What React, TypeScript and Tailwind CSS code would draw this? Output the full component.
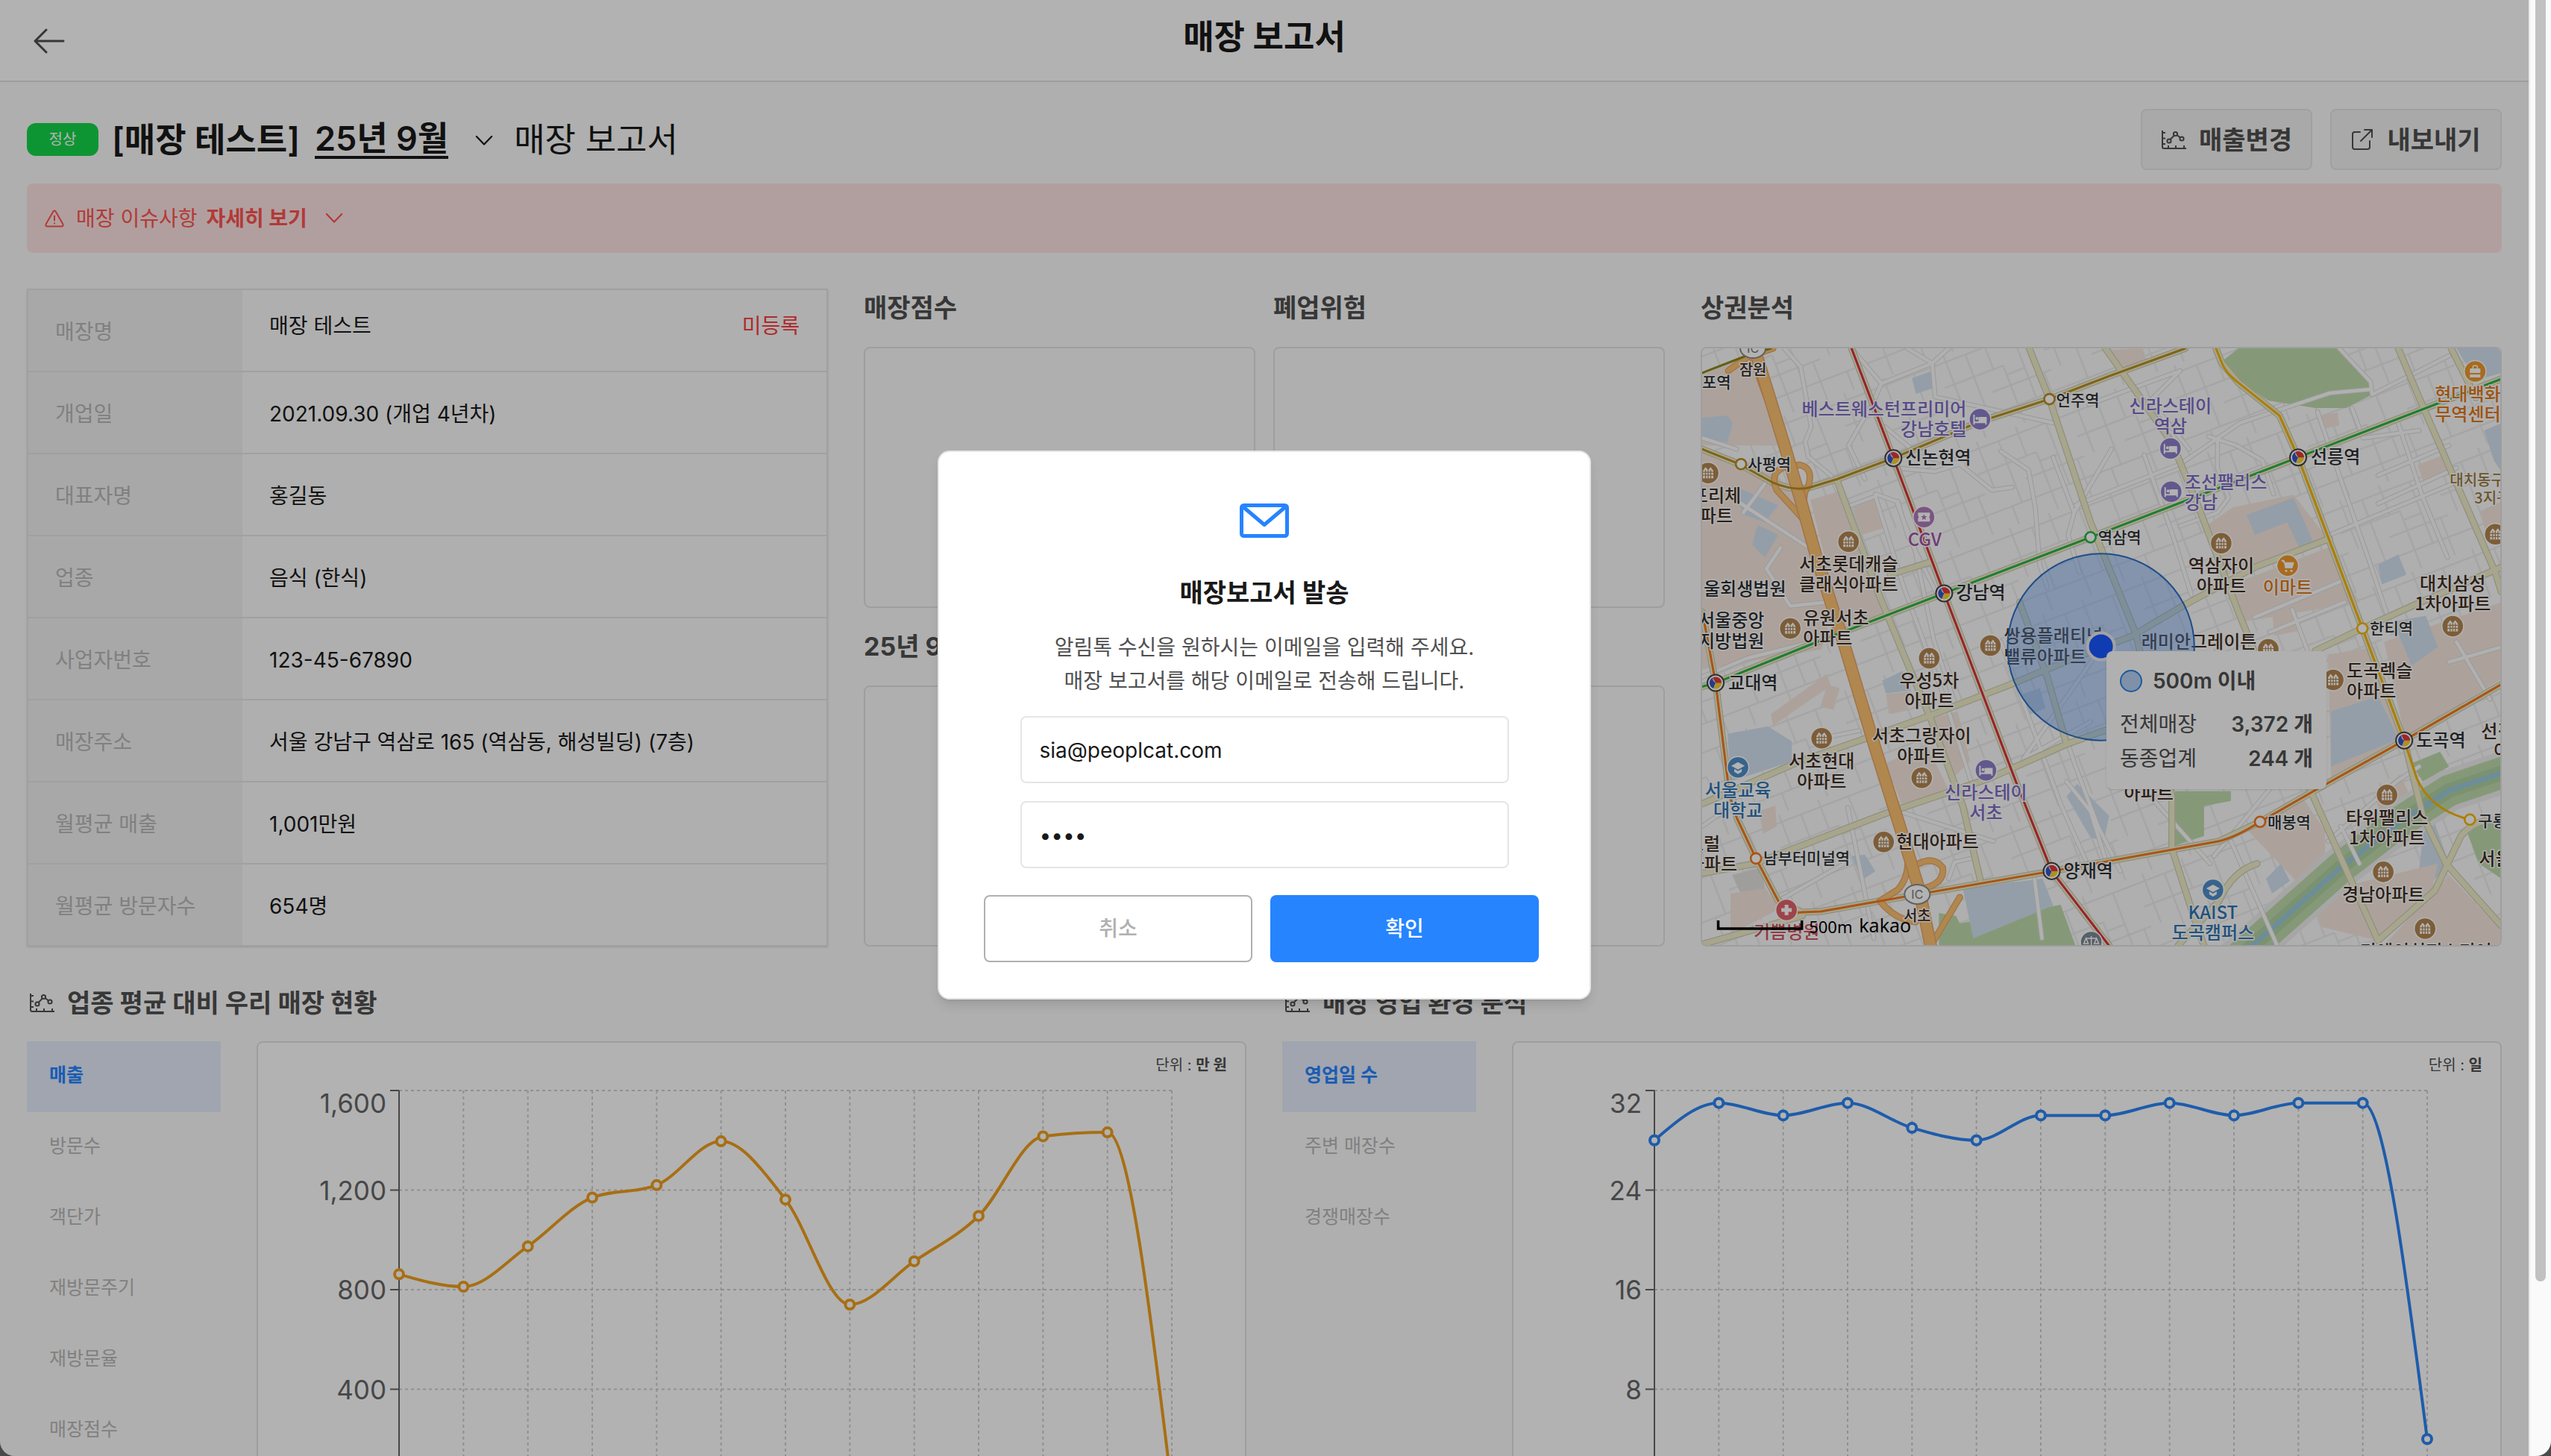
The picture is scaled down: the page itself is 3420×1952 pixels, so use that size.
import React, { useState } from 'react';

type Point = [number, number];

const storeInfo = [
  { label: '매장명', value: '매장 테스트', note: '미등록' },
  { label: '개업일', value: '2021.09.30 (개업 4년차)' },
  { label: '대표자명', value: '홍길동' },
  { label: '업종', value: '음식 (한식)' },
  { label: '사업자번호', value: '123-45-67890' },
  { label: '매장주소', value: '서울 강남구 역삼로 165 (역삼동, 해성빌딩) (7층)' },
  { label: '월평균 매출', value: '1,001만원' },
  { label: '월평균 방문자수', value: '654명' },
];

const salesTabs = ['매출', '방문수', '객단가', '재방문주기', '재방문율', '매장점수'];
const areaTabs = ['영업일 수', '주변 매장수', '경쟁매장수'];

const salesData = [862, 812, 974, 1170, 1220, 1396, 1162, 740, 914, 1096, 1416, 1432, 0];
const openDaysData = [28, 31, 30, 31, 29, 28, 30, 30, 31, 30, 31, 31, 4];

/* ---------- icons ---------- */

const ChartIcon = () => (
  <svg width="35" height="27" viewBox="-1 -1 35 27" fill="none" stroke="currentColor" strokeWidth="2" className="shrink-0">
    <path d="M1 0V22Q1 24 3 24H33M1 3H5M1 10.5H5M1 18H5M9 24V20M19 24V20M30 24V20M11.5 12 17 6.5M20.5 6 25 9.5" />
    <circle cx="10" cy="14" r="2.6" />
    <circle cx="18.5" cy="4.5" r="2.6" />
    <circle cx="27" cy="11" r="2.6" />
  </svg>
);

const ExportIcon = () => (
  <svg width="30" height="30" viewBox="0 0 30 30" fill="none" stroke="currentColor" strokeWidth="2" strokeLinecap="round" strokeLinejoin="round" className="shrink-0">
    <path d="M12 5H5Q2 5 2 8V25Q2 28 5 28H22Q25 28 25 25V17M18 2H28V12M28 2 13 17" />
  </svg>
);

const ChevronIcon = ({ className = '' }: { className?: string }) => (
  <svg width="24" height="15" viewBox="0 0 26 16" fill="none" stroke="currentColor" strokeWidth="2.4" strokeLinecap="round" strokeLinejoin="round" className={className}>
    <path d="M2 2 13 13.500 24 2" />
  </svg>
);

const WarningIcon = () => (
  <svg width="26" height="24" viewBox="0 0 26 24" fill="none" stroke="currentColor" strokeWidth="2" strokeLinecap="round" strokeLinejoin="round" className="shrink-0">
    <path d="M11.4 2.5 1.6 19.5Q.6 22.5 3.4 22.5H22.6Q25.4 22.5 24.4 19.5L14.6 2.5Q13 .6 11.4 2.5ZM13 8.5V14.5M13 18.2V18.4" />
  </svg>
);

const MailIcon = () => (
  <svg width="68" height="48" viewBox="0 0 68 48" fill="none" stroke="#2684ff" strokeWidth="5" strokeLinejoin="round">
    <rect x="3.5" y="3.5" width="61" height="41" rx="3" />
    <path d="M5 5 34 29.5 63 5" />
  </svg>
);

/* ---------- line chart ---------- */

// Monotone cubic interpolation, so that the curve never overshoots its points
function monotonePath(points: Point[]) {
  const n = points.length;
  const h: number[] = [];
  const s: number[] = [];
  for (let i = 0; i < n - 1; i++) {
    h.push(points[i + 1][0] - points[i][0]);
    s.push((points[i + 1][1] - points[i][1]) / h[i]);
  }
  const t: number[] = new Array(n).fill(0);
  for (let i = 1; i < n - 1; i++) {
    const p = (s[i - 1] * h[i] + s[i] * h[i - 1]) / (h[i - 1] + h[i]);
    t[i] = (Math.sign(s[i - 1]) + Math.sign(s[i])) * Math.min(Math.abs(s[i - 1]), Math.abs(s[i]), 0.5 * Math.abs(p));
  }
  t[0] = (3 * s[0] - t[1]) / 2;
  t[n - 1] = (3 * s[n - 2] - t[n - 2]) / 2;

  let d = `M${points[0][0]},${points[0][1]}`;
  for (let i = 0; i < n - 1; i++) {
    const [x0, y0] = points[i];
    const [x1, y1] = points[i + 1];
    const dx = h[i] / 3;
    d += `C${x0 + dx},${y0 + dx * t[i]},${x1 - dx},${y1 - dx * t[i + 1]},${x1},${y1}`;
  }
  return d;
}

interface LineChartProps {
  data: number[];
  max: number;
  color: string;
  unit: string;
}

const LineChart: React.FC<LineChartProps> = ({ data, max, color, unit }) => {
  const left = 189;
  const right = 1225;
  const top = 14;
  const bottom = 548;
  const step = (right - left) / (data.length - 1);
  const points = data.map((v, i): Point => [left + i * step, bottom - (v / max) * (bottom - top)]);
  const ticks = [4, 3, 2, 1, 0];

  return (
    <div className="min-w-0 flex-1 rounded-lg border-2 border-[#e3e3e3] bg-white">
      <p className="pt-3 pr-6 pb-0.5 text-right text-[20px] leading-9 text-[#505050]">
        단위 : <span className="font-semibold">{unit}</span>
      </p>
      <svg viewBox="0 0 1323 600" className="block w-full">
        {ticks.map((tick) => {
          const y = bottom - (tick / 4) * (bottom - top);
          return (
            <g key={tick}>
              <line x1={left} x2={right} y1={y} y2={y} stroke="#cfcfcf" strokeWidth="2" strokeDasharray="4 4" />
              <line x1={left - 12} x2={left} y1={y} y2={y} stroke="#666" strokeWidth="2" />
              <text x={left - 17} y={y + (tick === 4 ? 30 : 13)} textAnchor="end" fontSize="35" fill="#666">
                {((max / 4) * tick).toLocaleString()}
              </text>
            </g>
          );
        })}
        {points.slice(1).map(([x]) => (
          <line key={x} x1={x} x2={x} y1={top} y2={bottom} stroke="#cfcfcf" strokeWidth="2" strokeDasharray="4 4" />
        ))}
        <line x1={left} x2={left} y1={top} y2={bottom} stroke="#666" strokeWidth="2" />
        <path d={monotonePath(points)} fill="none" stroke={color} strokeWidth="4" />
        {points.map(([x, y]) => (
          <circle key={x} cx={x} cy={y} r="6" fill="#fff" stroke={color} strokeWidth="4" />
        ))}
      </svg>
    </div>
  );
};

/* ---------- map ---------- */

const areas: [string, string][] = [
  ['#f6e9df', '0,36 60,10 110,130 0,130'],
  ['#f6e9df', '0,140 100,170 124,196 149,260 174,350 160,403 0,430'],
  ['#f6e9df', '145,203 188,190 245,356 188,376'],
  ['#f6e9df', '202,213 231,201 245,240 213,250'],
  ['#d5e3f1', '0,93 34,90 41,100 34,126 0,120'],
  ['#d5e3f1', '40,183 102,210 84,233 56,223'],
  ['#d5e3f1', '74,236 102,250 84,280 67,263'],
  ['#d5e3f1', '281,40 308,30 311,53 286,61'],
  ['#bfdbac', '699,15 718,0 853,0 880,28 895,46 895,63 862,80 821,80 758,70 703,33'],
  ['#f6e9df', '677,236 710,213 792,196 836,253 703,303'],
  ['#d5e3f1', '729,223 792,200 818,258 799,266 783,233 740,250'],
  ['#f6e9df', '710,316 840,266 880,340 725,366'],
  ['#d5e3f1', '1010,0 1070,0 1070,33 1036,43'],
  ['#d5e3f1', '1047,110 1070,100 1070,165 1060,150'],
  ['#f6e9df', '958,156 992,143 999,170 966,180'],
  ['#f6e9df', '829,90 851,86 853,103 832,108'],
  ['#f6e9df', '548,2 590,0 596,18 560,28'],
  ['#d5e3f1', '905,290 932,276 943,303 910,316'],
  ['#f6e9df', '764,360 795,345 800,378 766,385'],
  ['#f6e9df', '1042,218 1070,205 1070,260 1050,250'],
  ['#f6e9df', '913,393 1070,340 1070,443 941,520'],
  ['#d5e3f1', '925,366 969,358 985,400 950,425'],
  ['#f6e9df', '838,410 900,400 940,525 842,575'],
  ['#d5e3f1', '842,486 905,466 933,523 842,560'],
  ['#bfdbac', '949,556 988,540 1000,560 965,580'],
  ['#f6e9df', '900,600 935,570 950,605 915,640'],
  ['#bfdbac', '633,593 708,593 708,606 672,613 672,653 633,666'],
  ['#f6e9df', '731,646 803,600 834,646 834,676 795,713'],
  ['#d5e3f1', '755,710 775,690 787,713 763,730'],
  ['#d5e3f1', '965,650 980,633 1000,690 980,712 960,700'],
  ['#bfdbac', '1025,650 1048,633 1070,630 1070,710 1040,690'],
  ['#f6e9df', '860,720 985,690 975,735 905,793 830,775 818,743'],
  ['#f6e9df', '912,800 1000,705 1070,780 1070,800'],
  ['#d5e3f1', '34,516 88,506 120,526 120,553 38,580'],
  ['#bfdbac', '317,756 340,760 345,770 480,745 500,800 317,800'],
  ['#d5e3f1', '349,723 456,710 470,746 363,790'],
  ['#d5e3f1', '488,600 502,583 545,626 538,660 520,655'],
  ['#f6e9df', '245,556 300,530 331,593 267,610'],
  ['#f6e9df', '306,496 342,486 359,553 331,580'],
  ['#f6e9df', '92,490 167,436 172,452 95,505'],
  ['#f6e9df', '158,480 168,450 184,455 176,484'],
  ['#e6e2e0', '40,705 78,696 86,730 54,735'],
  ['#f6e9df', '38,730 85,723 104,750 38,785'],
  ['#d5e3f1', '241,445 268,432 280,458 246,462'],
  ['#f6e9df', '246,463 280,459 275,485 250,490'],
  ['#d5e3f1', '200,680 218,678 232,700 214,712'],
  ['#d5e3f1', '424,465 452,455 460,482 435,492'],
  ['#f6e9df', '76,620 98,612 100,640 82,650'],
];

const localRoads = [
  'M110,0 L132,25 L146,105 L138,125 L142,145 L172,170 L181,190',
  'M200,0 L240,47 L308,20 L330,0',
  'M240,47 L230,70 L216,95 L196,130 L218,175',
  'M275,0 L308,20 L312,65 L470,100',
  'M245,105 L292,145 L350,155',
  'M258,160 L312,165 L345,155 L388,190 L415,186',
  'M400,138 L437,163 L446,213 L452,290 L462,320',
  'M470,146 L498,220 L490,250 L505,300',
  'M548,135 L498,220',
  'M0,120 L46,135',
  'M40,200 L140,265 M55,220 L85,180',
  'M105,267 L86,295 L118,345 L165,340',
  'M200,210 L232,198 L270,320 L325,470 L360,580',
  'M232,195 L260,205 L285,270 L310,390 L340,480',
  'M262,205 L275,250 L315,330',
  'M0,440 L60,415 L140,395',
  'M518,75 L640,30 L600,70 L652,135',
  'M500,210 L640,155 L720,100 L840,60 L895,55',
  'M678,118 L715,130 L750,150 L765,195',
  'M592,143 L630,250 L655,330',
  'M640,238 L690,220 L705,200 L690,160 L690,120',
  'M853,0 L895,45 L897,62 L1000,10',
  'M870,80 L885,120 L960,110',
  'M824,85 L860,190 L895,290 L925,380',
  'M932,100 L965,200 L998,280',
  'M905,170 L1000,130 M905,208 L1010,160 M840,250 L1020,175',
  'M545,385 L430,550 L520,500',
  'M445,393 L500,560 L530,640 L560,700',
  'M400,393 L480,610 L520,700',
  'M488,580 L520,620 L545,700',
  'M0,640 L50,605',
  'M102,740 L190,690 M195,615 L230,790',
  'M160,522 L210,512',
  'M330,710 L338,688 L360,683',
  'M255,617 L390,660',
  'M445,710 L455,790',
  'M1000,420 L1070,400 M1010,393 L1055,470',
  'M838,660 L930,580 L960,560 M855,640 L880,690',
  'M708,660 L770,800',
  'M685,680 L760,590',
  'M600,600 L680,690',
  'M740,360 L860,310 M760,380 L860,340 M790,350 L820,430',
];

const mainRoads = [
  'M438,0 L465,68 L520,233 L581,383 L629,600 L629,670 L660,766 L672,800',
  'M540,0 L629,126 L666,216 L718,353 L815,593 L905,793',
  'M932,0 L966,80 L1062,300 L1070,326',
  'M1003,0 L1036,66',
  'M413,450 L495,416 L574,386 L647,343 L740,293 L840,255',
  'M181,178 L238,333 L267,403 L306,496 L349,613 L372,710',
  'M0,610 L131,553 L217,523 L302,493 L413,450',
  'M0,703 L70,690 L245,623 L384,576 L488,530 L600,490',
  'M425,340 L462,440 L488,530',
  'M905,793 L981,726 L1016,653 Q1030,636 1048,633',
  'M688,0 L696,20 L718,46 L773,90 L798,146 L884,375 L940,525 L965,626 L996,690 L1070,773',
  'M821,405 L884,375 L962,340 L1070,293',
  'M252,303 L306,286',
  'M637,800 L692,740 Q710,700 743,690',
  'M200,0 L256,147 L324,328 L349,393 L420,580 L468,700 L545,800',
  'M0,135 L50,155 L95,180 Q125,192 145,186 L181,175 L256,147 L372,98 L465,68 L548,36 L647,0',
  'M0,453 L18,448 L149,395 L324,328 L520,253 L798,146 L1070,41',
  'M0,353 L18,448 L34,576 L47,630 L72,683 L102,740 L134,755 L159,754 L238,740 L468,700 L542,687 L692,660 L747,634 L822,591 L940,525 L1070,450',
  'M0,798 L134,760',
];

const subwayLines: [string, string][] = [
  ['#8d8a1a', 'M0,33 L59,10 L92,0'],
  ['#b98e22', 'M0,135 L50,155 L95,180 Q125,192 145,186 L181,175 L256,147 L372,98 L465,68 L548,36 L647,0'],
  ['#2bb348', 'M0,453 L18,448 L149,395 L324,328 L520,253 L798,146 L1070,41'],
  ['#f7b500', 'M688,0 L696,20 Q702,34 718,46 L773,90 L798,146 L884,375 L940,525 L957,576 Q975,618 1028,631'],
  ['#f4791f', 'M0,353 L6,383 L18,448 L34,576 Q38,610 47,630 L72,683 L102,740 Q112,757 134,755 L159,754 L238,740 L468,700 L542,687 L692,660 Q716,654 747,634 L822,591 L940,525 L1070,450'],
  ['#dc2f3f', 'M200,0 L256,147 L324,328 L349,393 L420,580 L468,700 L545,800'],
];

const highways = [
  'M70,0 L109,126 L131,200 L152,276 L190,396 L231,533 L274,670 L291,726 L306,800',
];

const ramps = [
  'M66,10 L84,60 L109,126',
  'M152,276 Q148,245 132,225 L100,190 Q90,168 108,160 M126,190 Q110,160 130,156 Q150,160 142,185 Q132,195 140,230',
  'M274,670 Q280,705 262,725 L238,740 Q258,765 286,768 M290,690 Q310,680 322,695 Q325,715 300,722 M345,735 L315,785 L306,800',
  'M35,30 L60,12 L95,0',
];

interface MapLabel {
  x: number;
  y: number;
  lines: string[];
  anchor?: 'start' | 'middle' | 'end';
  color?: string;
  size?: number;
}

const brown = '#3f2d20';
const purple = '#7c6ac4';
const ink = '#2c2f33';

const labels: MapLabel[] = [
  { x: 0, y: 45, lines: ['포역'], size: 21, color: ink },
  { x: 68, y: 28, lines: ['잠원'], size: 20, anchor: 'middle' },
  { x: 61, y: 155, lines: ['사평역'], size: 21, color: ink },
  { x: 272, y: 147, lines: ['신논현역'], color: ink },
  { x: 474, y: 69, lines: ['언주역'], size: 21, color: ink },
  { x: 354, y: 82, lines: ['베스트웨스턴프리미어', '강남호텔'], anchor: 'end', color: purple },
  { x: 298, y: 257, lines: ['CGV'], anchor: 'middle', color: '#a055a8' },
  { x: 196, y: 290, lines: ['서초롯데캐슬', '클래식아파트'], anchor: 'middle' },
  { x: 135, y: 362, lines: ['유원서초', '아파트'] },
  { x: 2, y: 323, lines: ['울회생법원'], color: ink },
  { x: -5, y: 365, lines: ['서울중앙', '지방법원'], color: ink },
  { x: 52, y: 198, lines: ['프리체'], anchor: 'end' },
  { x: 41, y: 225, lines: ['파트'], anchor: 'end' },
  { x: 340, y: 328, lines: ['강남역'], color: ink },
  { x: 530, y: 253, lines: ['역삼역'], size: 21, color: ink },
  { x: 627, y: 78, lines: ['신라스테이', '역삼'], anchor: 'middle', color: purple },
  { x: 646, y: 180, lines: ['조선팰리스', '강남'], color: purple },
  { x: 815, y: 146, lines: ['선릉역'], color: ink },
  { x: 981, y: 62, lines: ['현대백화', '무역센터'], color: '#e07818' },
  { x: 1001, y: 176, lines: ['대치동구'], size: 20, color: '#9a7a3c' },
  { x: 1034, y: 200, lines: ['3지구'], size: 20, color: '#9a7a3c' },
  { x: 695, y: 292, lines: ['역삼자이', '아파트'], anchor: 'middle' },
  { x: 784, y: 321, lines: ['이마트'], anchor: 'middle', color: '#e07818' },
  { x: 1005, y: 316, lines: ['대치삼성', '1차아파트'], anchor: 'middle' },
  { x: 894, y: 375, lines: ['한티역'], size: 21, color: ink },
  { x: 588, y: 393, lines: ['래미안그레이튼'] },
  { x: 404, y: 386, lines: ['쌍용플래티넘', '밸류아파트'] },
  { x: 35, y: 448, lines: ['교대역'], color: ink },
  { x: 304, y: 445, lines: ['우성5차', '아파트'], anchor: 'middle' },
  { x: 160, y: 553, lines: ['서초현대', '아파트'], anchor: 'middle' },
  { x: 294, y: 519, lines: ['서초그랑자이', '아파트'], anchor: 'middle' },
  { x: 48, y: 592, lines: ['서울교육', '대학교'], anchor: 'middle', color: '#2f74b5' },
  { x: 380, y: 595, lines: ['신라스테이', '서초'], anchor: 'middle', color: purple },
  { x: 24, y: 664, lines: ['트럴'], anchor: 'end' },
  { x: 47, y: 691, lines: ['아파트'], anchor: 'end' },
  { x: 82, y: 682, lines: ['남부터미널역'], size: 21, color: ink },
  { x: 260, y: 661, lines: ['현대아파트'] },
  { x: 484, y: 700, lines: ['양재역'], color: ink },
  { x: 288, y: 759, lines: ['서초'], size: 20, anchor: 'middle' },
  { x: 113, y: 782, lines: ['기쁨병원'], anchor: 'middle', color: '#cf5560' },
  { x: 598, y: 596, lines: ['아파트'], anchor: 'middle' },
  { x: 863, y: 432, lines: ['도곡렉슬', '아파트'] },
  { x: 956, y: 525, lines: ['도곡역'], color: ink },
  { x: 1043, y: 513, lines: ['선경'] },
  { x: 1060, y: 539, lines: ['아파트'] },
  { x: 757, y: 634, lines: ['매봉역'], size: 21, color: ink },
  { x: 917, y: 629, lines: ['타워팰리스', '1차아파트'], anchor: 'middle' },
  { x: 1039, y: 632, lines: ['구룡역'], size: 21, color: ink },
  { x: 1040, y: 684, lines: ['서울'] },
  { x: 912, y: 732, lines: ['경남아파트'], anchor: 'middle' },
  { x: 684, y: 756, lines: ['KAIST', '도곡캠퍼스'], anchor: 'middle', color: '#2f74b5' },
  { x: 969, y: 808, lines: ['디에이치퍼스티어'], anchor: 'middle' },
];

const apartments: Point[] = [
  [8, 167], [196, 259], [118, 375], [386, 398], [695, 261], [1062, 249], [1005, 372], [758, 403],
  [304, 415], [160, 522], [294, 575], [243, 661], [845, 444], [917, 598], [912, 701], [968, 777],
];
const hotels: Point[] = [[372, 95], [627, 134], [628, 192], [380, 565]];
const schools: Point[] = [[48, 561], [684, 725]];
const transfers: Point[] = [[256, 147], [324, 328], [798, 146], [18, 448], [468, 700], [940, 525]];
const stations: [number, number, string][] = [
  [52, 155, '#b98e22'], [465, 68, '#b98e22'], [520, 253, '#2bb348'], [884, 375, '#f7b500'],
  [1028, 631, '#f7b500'], [72, 683, '#f4791f'], [747, 634, '#f4791f'],
];

interface MarkerProps {
  at: Point;
  color: string;
  children: React.ReactNode;
}

const Marker: React.FC<MarkerProps> = ({ at, color, children }) => (
  <g transform={`translate(${at[0]} ${at[1]})`}>
    <circle r="14.5" fill={color} stroke="#fff" strokeWidth="1.5" />
    {children}
  </g>
);

const AreaMap = () => (
  <svg viewBox="0 0 1070 799" preserveAspectRatio="xMinYMin slice" className="block h-full w-full" role="img" aria-label="상권분석 지도">
    <defs>
      <pattern id="streets" width="142" height="124" patternUnits="userSpaceOnUse" patternTransform="rotate(-21)">
        <path
          d="M0,10H142M0,42H84M58,70H142M0,98H142M14,0V70M42,10V98M70,0V42M84,42V124M110,10V98M132,70V124M28,98V124M84,55H110"
          fill="none"
          stroke="#ebebeb"
          strokeWidth="2.2"
        />
      </pattern>
    </defs>
    <rect width="1070" height="800" fill="#fbfbfb" />
    <rect width="1070" height="800" fill="url(#streets)" />
    {areas.map(([fill, points]) => (
      <polygon key={points} points={points} fill={fill} />
    ))}
    <path d="M712,822 L854,696 L930,637 L1000,592 L1075,567" fill="none" stroke="#eeeeee" strokeWidth="56" />
    <path d="M712,822 L854,696 L930,637 L1000,592 L1075,567" fill="none" stroke="#bfdbac" strokeWidth="42" />
    <path d="M712,822 L854,696 L930,637 L1000,592 L1075,567" fill="none" stroke="#b0d2a2" strokeWidth="20" />
    <path d="M712,822 L854,696 L930,637 L1000,592 L1075,567" fill="none" stroke="#9ccbdb" strokeWidth="7" />
    <g fill="none" strokeLinecap="round" strokeLinejoin="round">
      {localRoads.map((d) => (
        <path key={d} d={d} stroke="#dcdcdc" strokeWidth="6.5" />
      ))}
      {localRoads.map((d) => (
        <path key={d} d={d} stroke="#fdfdfd" strokeWidth="4.5" />
      ))}
      {mainRoads.map((d) => (
        <path key={d} d={d} stroke="#cdcdb4" strokeWidth="9.5" />
      ))}
      {mainRoads.map((d) => (
        <path key={d} d={d} stroke="#f0eecb" strokeWidth="7" />
      ))}
      {ramps.map((d) => (
        <path key={d} d={d} stroke="#e8a566" strokeWidth="9" />
      ))}
      {ramps.map((d) => (
        <path key={d} d={d} stroke="#fcc272" strokeWidth="6.5" />
      ))}
      {highways.map((d) => (
        <path key={d} d={d} stroke="#e8a566" strokeWidth="17" />
      ))}
      {highways.map((d) => (
        <path key={d} d={d} stroke="#fcc272" strokeWidth="14" />
      ))}
      {subwayLines.map(([color, d]) => (
        <path key={color} d={d} stroke={color} strokeWidth="3" />
      ))}
    </g>

    {stations.map(([x, y, color]) => (
      <circle key={`${x}-${y}`} cx={x} cy={y} r="7" fill="#fff" stroke={color} strokeWidth="2.6" />
    ))}
    {transfers.map(([x, y]) => (
      <g key={`${x}-${y}`} transform={`translate(${x} ${y})`}>
        <circle r="11" fill="#fff" stroke="#444" strokeWidth="2" />
        <path d="M0,0 L-4,-7 A8,8 0 0 1 8,0 Q4,4 0,0Z" fill="#e03a3a" />
        <path d="M0,0 L8,0 A8,8 0 0 1 -3,7.4 Q0,3 0,0Z" fill="#f7d02c" />
        <path d="M0,0 L-3,7.4 A8,8 0 0 1 -4,-7 Q-4,-2 0,0Z" fill="#3555c8" />
      </g>
    ))}
    {[[68, 0], [288, 731]].map(([x, y]) => (
      <g key={x}>
        <ellipse cx={x} cy={y} rx="17" ry="13" fill="#fff" stroke="#8a8a8a" strokeWidth="2" />
        <text x={x} y={y + 6} textAnchor="middle" fontSize="16" fill="#777">IC</text>
      </g>
    ))}
    {apartments.map((at) => (
      <Marker key={at.join()} at={at} color="#b38650">
        <path d="M-7,7V-3L-3.500,-8 0,-4 3.500,-8 7,-3V7Z" fill="#fff" />
        <path d="M-7,-1H7M-7,3H7M-3.500,-4V7M0,-4V7M3.500,-4V7" stroke="#b38650" strokeWidth="1.2" />
      </Marker>
    ))}
    {hotels.map((at) => (
      <Marker key={at.join()} at={at} color="#8d7fcb">
        <path d="M-8,-6V7M-8,4H8M8,7V-2H-1V4" stroke="#fff" strokeWidth="2" fill="none" />
        <path d="M-1,-3H8V4H-1Z" fill="#fff" />
        <circle cx="-4" cy="-1" r="2" fill="#fff" />
      </Marker>
    ))}
    {schools.map((at) => (
      <Marker key={at.join()} at={at} color="#4f8fcb">
        <path d="M0,-7 9,-2 0,3 -9,-2ZM-5,2V6L0,9 5,6V2L0,5Z" fill="#fff" />
      </Marker>
    ))}
    <Marker at={[297, 226]} color="#b07abb">
      <path d="M-8,-6H8V-2Q6,0 8,2V6H-8V2Q-6,0 -8,-2Z" fill="#fff" />
      <path d="M0,-4 1.200,-1.200 4,-1 1.800,1 2.500,4 0,2.300 -2.500,4 -1.800,1 -4,-1 -1.200,-1.200Z" fill="#b07abb" />
    </Marker>
    <Marker at={[784, 291]} color="#f09a2c">
      <path d="M-8,-7H-5L-3,3H6L8,-4H-4.500Z" fill="#fff" stroke="#fff" strokeLinejoin="round" />
      <circle cx="-2" cy="7" r="1.500" fill="#fff" />
      <circle cx="5" cy="7" r="1.500" fill="#fff" />
    </Marker>
    <Marker at={[1035, 31]} color="#f09a2c">
      <path d="M-7,-4H7V2H-7ZM-7,4H7V8H-7Z" fill="#fff" />
      <path d="M-3,-4V-6Q-3,-8 0,-8T3,-6V-4" fill="none" stroke="#fff" strokeWidth="1.500" />
    </Marker>
    <Marker at={[113, 752]} color="#e2606a">
      <path d="M-2.500,-7H2.500V-2.500H7V2.500H2.500V7H-2.500V2.500H-7V-2.500H-2.500Z" fill="#fff" />
    </Marker>
    <Marker at={[521, 795]} color="#7d8894">
      <path d="M0,-8V6M-7,-5H7M-7,-5 -10,2H-4ZM7,-5 4,2H10Z" fill="none" stroke="#fff" strokeWidth="1.500" />
    </Marker>

    {labels.map(({ x, y, lines, anchor = 'start', color = brown, size = 24 }) => (
      <text
        key={`${x}-${y}`}
        textAnchor={anchor}
        fontSize={size}
        fontWeight="500"
        fill={color}
        stroke="#fff"
        strokeWidth="3"
        strokeLinejoin="round"
        paintOrder="stroke"
        className="font-['Noto_Sans_CJK_KR',sans-serif]"
      >
        {lines.map((line, i) => (
          <tspan key={line} x={x} y={y + 8 + i * 27}>
            {line}
          </tspan>
        ))}
      </text>
    ))}

    <circle cx="534" cy="400" r="125" fill="#5f9cf0" fillOpacity="0.4" stroke="#2c6fc0" strokeWidth="2" />
    <circle cx="534" cy="399" r="18" fill="#1857ff" stroke="#eaeaea" strokeWidth="4" />

    <path d="M21.500,766V777H133.500V766" fill="none" stroke="#000" strokeWidth="3.500" />
    <text x="143" y="783" fontSize="22" className="font-['Noto_Sans',sans-serif]">500m</text>
    <text x="210" y="782" fontSize="25" className="font-['Noto_Sans',sans-serif]">kakao</text>
  </svg>
);

/* ---------- page sections ---------- */

const SectionTitle: React.FC<{ children: React.ReactNode }> = ({ children }) => (
  <h3 className="text-[34px] leading-[52px] font-bold text-[#505050]">{children}</h3>
);

const EmptyCard = () => <div className="flex-1 rounded-lg border-2 border-[#e3e3e3]" />;

interface ReportPanelProps extends LineChartProps {
  title: string;
  tabs: string[];
}

const ReportPanel: React.FC<ReportPanelProps> = ({ title, tabs, ...chart }) => {
  const [selected, setSelected] = useState(tabs[0]);

  return (
    <section>
      <div className="mb-[27px] flex h-[50px] items-center gap-4 pl-[3px] text-[#505050]">
        <ChartIcon />
        <h3 className="text-[34px] font-bold">{title}</h3>
      </div>
      <div className="flex items-start gap-12">
        <div className="flex w-[260px] shrink-0 flex-col">
          {tabs.map((tab) => (
            <button
              key={tab}
              type="button"
              onClick={() => setSelected(tab)}
              className={`h-[95px] pb-1 pl-[30px] text-left text-[25px] ${
                tab === selected ? 'bg-[#e6ecfd] font-bold text-[#2684ff]' : 'text-[#b8b8b8]'
              }`}
            >
              {tab}
            </button>
          ))}
        </div>
        <LineChart {...chart} />
      </div>
    </section>
  );
};

const EmailDialog = () => {
  const [email, setEmail] = useState('sia@peoplcat.com');
  const [password, setPassword] = useState('1234');
  const inputClass = 'h-[90px] w-full rounded-lg border-2 border-[#e5e5e5] bg-white px-6 pt-0.5 text-[28px] text-[#191919] outline-none';

  return (
    <div
      role="dialog"
      aria-modal="true"
      aria-labelledby="dialog-title"
      className="flex w-[876px] flex-col items-center rounded-2xl border-2 border-[#e5e5e5] bg-white px-15 pt-[68px] pb-12 shadow-lg"
    >
      <MailIcon />
      <h2 id="dialog-title" className="mt-12 text-[34px] leading-[50px] font-bold text-[#191919]">
        매장보고서 발송
      </h2>
      <p className="mt-[26px] text-center text-[28px] leading-[45px] text-[#505050]">
        알림톡 수신을 원하시는 이메일을 입력해 주세요.
        <br />
        매장 보고서를 해당 이메일로 전송해 드립니다.
      </p>
      <form className="mt-6 flex w-[655px] flex-col gap-6">
        <input
          type="email"
          aria-label="이메일"
          value={email}
          onChange={(e) => setEmail(e.target.value)}
          className={inputClass}
        />
        <input
          type="password"
          aria-label="비밀번호"
          value={password}
          onChange={(e) => setPassword(e.target.value)}
          className={inputClass}
        />
      </form>
      <div className="mt-9 mr-2 flex gap-6 text-[28px] font-medium">
        <button type="button" className="h-[90px] w-[360px] rounded-lg border-2 border-[#b0b0b0] text-[#b0b0b0]">
          취소
        </button>
        <button type="button" className="h-[90px] w-[360px] rounded-lg bg-[#2684ff] text-white">
          확인
        </button>
      </div>
    </div>
  );
};

export default function App() {
  return (
    <div className="h-screen bg-[#4a4a4a]">
      <div className="flex h-full overflow-hidden rounded-b-[20px] font-['Inter','Noto_Sans_CJK_KR',sans-serif]">
        <div className="relative min-w-0 flex-1 overflow-hidden bg-[#fbfbfb]">
          <header className="grid h-[110px] grid-cols-[1fr_auto_1fr] items-center border-b-2 border-[#e3e3e3] bg-white px-11">
            <button type="button" aria-label="뒤로가기" className="w-fit pt-0.5 text-[#505050]">
              <svg width="44" height="34" viewBox="0 0 44 34" fill="none" stroke="currentColor" strokeWidth="3" strokeLinecap="round" strokeLinejoin="round">
                <path d="M41 17H3M18 2 3 17 18 32" />
              </svg>
            </button>
            <h1 className="pb-2 text-[45px] font-bold text-[#191919]">매장 보고서</h1>
          </header>

          <main className="px-9 pt-9">
            <div className="flex items-center">
              <span className="flex h-11 w-24 items-center justify-center rounded-xl bg-[#15d64a] text-[20px] text-white">정상</span>
              <h2 className="ml-[18px] flex items-center pt-0.5 text-[45px] text-[#191919]">
                <span className="font-semibold">[매장 테스트]</span>
                <button type="button" className="ml-5 flex items-center">
                  <span className="border-b-4 border-[#191919] leading-[46px] font-semibold">25년 9월</span>
                  <ChevronIcon className="mr-7 ml-9" />
                </button>
                <span>매장 보고서</span>
              </h2>
              <div className="ml-auto flex gap-6 text-[34px] font-semibold text-[#505050]">
                <button type="button" className="flex h-[82px] w-[230px] items-center justify-center gap-4 rounded-lg border-2 border-[#e5e5e5] bg-[#f3f3f3]">
                  <ChartIcon />
                  매출변경
                </button>
                <button type="button" className="flex h-[82px] w-[230px] items-center justify-center gap-[18px] rounded-lg border-2 border-[#e5e5e5] bg-[#f3f3f3]">
                  <ExportIcon />
                  내보내기
                </button>
              </div>
            </div>

            <button type="button" className="mt-[18px] flex h-[93px] w-full items-center rounded-lg bg-[#fee4e4] px-6 text-[28px] text-[#ff5350]">
              <WarningIcon />
              <span className="ml-4">매장 이슈사항</span>
              <span className="ml-3 font-bold">자세히 보기</span>
              <ChevronIcon className="ml-6" />
            </button>

            <div className="mt-12 grid grid-cols-3 gap-12">
              <table className="w-full border-collapse border-2 border-[#e5e5e5] text-[28px] shadow-sm">
                <tbody>
                  {storeInfo.map(({ label, value, note }) => (
                    <tr key={label} className="h-[110px] border-b-2 border-[#e5e5e5]">
                      <th scope="row" className="w-[288px] bg-[#f1f1f1] pt-1 pl-9 text-left font-normal text-[#b8b8b8]">
                        {label}
                      </th>
                      <td className="pt-1 pr-9 pl-9 text-[#191919]">
                        {note ? (
                          <div className="flex justify-between pb-4">
                            <span>{value}</span>
                            <span className="text-[#fd3b40]">{note}</span>
                          </div>
                        ) : (
                          value
                        )}
                      </td>
                    </tr>
                  ))}
                </tbody>
              </table>

              <div className="grid grid-cols-2 gap-6">
                <div className="flex flex-col gap-[26px]">
                  <SectionTitle>매장점수</SectionTitle>
                  <EmptyCard />
                  <SectionTitle>25년 9월 매출</SectionTitle>
                  <EmptyCard />
                </div>
                <div className="flex flex-col gap-[26px]">
                  <SectionTitle>폐업위험</SectionTitle>
                  <EmptyCard />
                  <div className="h-[52px]" />
                  <EmptyCard />
                </div>
              </div>

              <div className="flex flex-col gap-[26px]">
                <SectionTitle>상권분석</SectionTitle>
                <div className="relative h-0 flex-1 overflow-hidden rounded-lg border-2 border-[#e3e3e3]">
                  <AreaMap />
                  <div className="absolute top-[406px] left-[542px] h-[185px] w-[295px] rounded-lg bg-[#fdfdfd] px-[18px] pt-[17px] text-[28px] text-[#505050] shadow-sm">
                    <div className="mb-3 flex h-[46px] items-center gap-[14px] font-semibold">
                      <span className="size-[30px] rounded-full border-2 border-[#2c80e0] bg-[#b5d0f2]" />
                      500m 이내
                    </div>
                    <div className="flex h-[46px] items-center justify-between">
                      전체매장 <span className="font-semibold">3,372 개</span>
                    </div>
                    <div className="flex h-[46px] items-center justify-between">
                      동종업계 <span className="font-semibold">244 개</span>
                    </div>
                  </div>
                </div>
              </div>
            </div>

            <div className="mt-[50px] grid grid-cols-2 gap-12">
              <ReportPanel title="업종 평균 대비 우리 매장 현황" tabs={salesTabs} data={salesData} max={1600} color="#f0a01e" unit="만 원" />
              <ReportPanel title="매장 영업 환경 분석" tabs={areaTabs} data={openDaysData} max={32} color="#2c84f5" unit="일" />
            </div>
          </main>

          <div className="absolute inset-0 flex items-center justify-center bg-black/30 pb-2">
            <EmailDialog />
          </div>
        </div>

        {/* Scroll track */}
        <div className="w-[30px] shrink-0 border-l-2 border-[#e8e8e8] bg-[#fafafa] px-[7px]">
          <div className="h-[88%] rounded-b-full bg-[#c1c1c1]" />
        </div>
      </div>
    </div>
  );
}
